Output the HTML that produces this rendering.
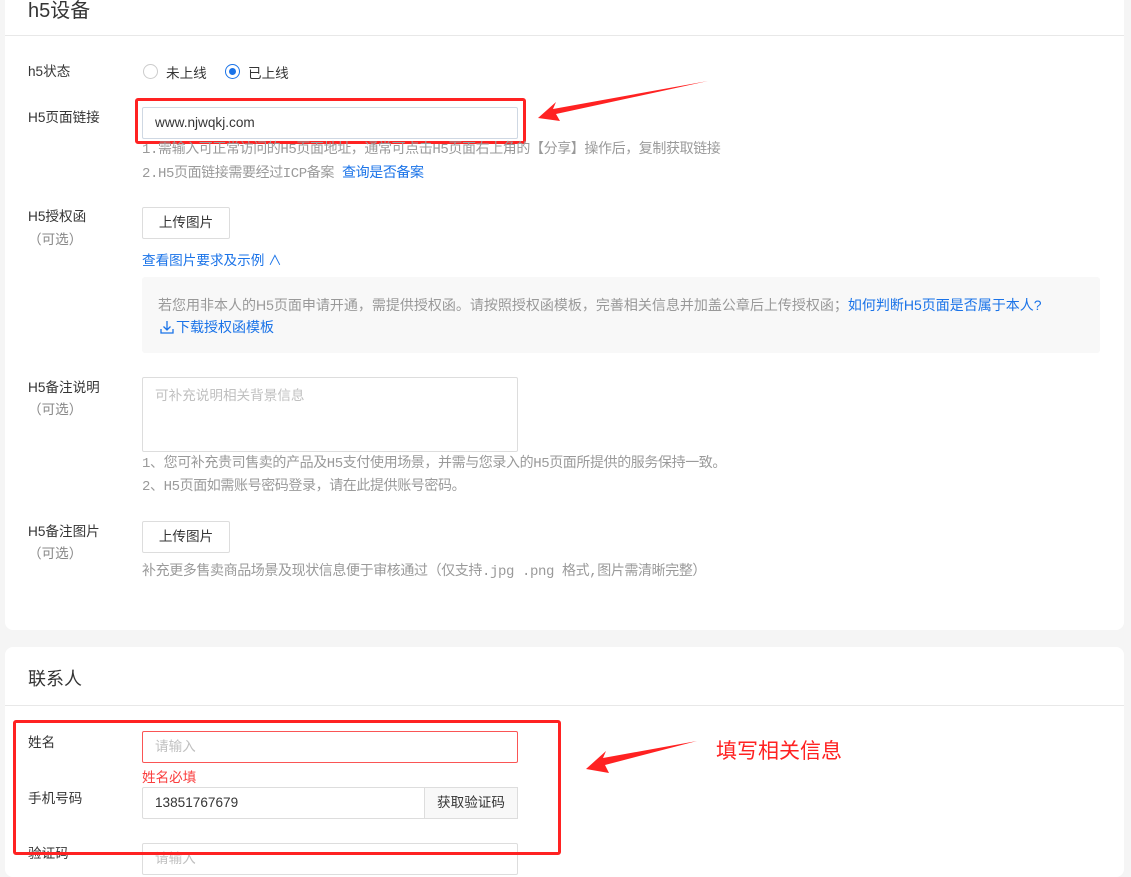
<!DOCTYPE html>
<html><head><meta charset="utf-8"><style>
*{margin:0;padding:0;box-sizing:border-box}
body{width:1131px;height:858px;background:#f5f5f5;font-family:"Liberation Sans","Noto Sans CJK SC",sans-serif;font-size:14px;color:#353535;position:relative;overflow:hidden}
.a{position:absolute}
.card{position:absolute;left:5px;width:1119px;background:#fff;border-radius:8px}
.lbl{position:absolute;left:28px;font-size:13.6px;color:#353535;line-height:18px}
.opt{color:#888}
.hint{position:absolute;left:142px;font-size:14px;color:#9a9a9a;line-height:18px;font-family:"Liberation Mono","Noto Sans CJK SC",monospace;letter-spacing:-0.4px}
.btn{position:absolute;left:142px;width:88px;height:32px;border:1px solid #ddd;border-radius:2px;text-align:center;line-height:30px;font-size:13.6px;color:#353535;background:#fff}
.inp{position:absolute;left:142px;width:376px;border:1px solid #ddd;border-radius:2px;font-size:13.6px;padding-left:12px}
.blue{color:#1a73e8}
.red{color:#fa3e3e}
</style></head><body>
<div class="card" style="top:-10px;height:640px"></div>
<div class="a" style="left:28px;top:-6px;font-size:20px;color:#353535">h5设备</div>
<div class="a" style="left:5px;top:35px;width:1119px;height:1px;background:#e8e8e8"></div>

<div class="lbl" style="top:63px">h5状态</div>
<div class="a" style="left:143px;top:64px;width:15px;height:15px;border:1px solid #ccc;border-radius:50%"></div>
<div class="a" style="left:166px;top:62px;font-size:13.6px">未上线</div>
<div class="a" style="left:225px;top:64px;width:15px;height:15px;border:1px solid #1a73e8;border-radius:50%"><div style="position:absolute;left:3px;top:3px;width:7px;height:7px;background:#1a73e8;border-radius:50%"></div></div>
<div class="a" style="left:248px;top:62px;font-size:13.6px">已上线</div>

<div class="lbl" style="top:109px">H5页面链接</div>
<div class="inp" style="top:107px;height:32px;line-height:30px;border-color:#cfd8e3;color:#353535">www.njwqkj.com</div>
<div class="a" style="left:135px;top:98px;width:391px;height:46px;border:3px solid #f22;border-radius:3px"></div>
<div class="hint" style="top:141px">1.需输入可正常访问的H5页面地址，通常可点击H5页面右上角的【分享】操作后，复制获取链接</div>
<div class="hint" style="top:163px">2.H5页面链接需要经过ICP备案 <span class="blue" style="font-family:'Liberation Sans','Noto Sans CJK SC',sans-serif">查询是否备案</span></div>

<div class="lbl" style="top:208px">H5授权函</div>
<div class="lbl opt" style="top:231px">（可选）</div>
<div class="btn" style="top:207px">上传图片</div>
<div class="a blue" style="left:142px;top:249px;font-size:13.6px">查看图片要求及示例 ∧</div>
<div class="a" style="left:142px;top:277px;width:958px;height:76px;background:#f8f8f8;border-radius:3px"></div>
<div class="a" style="left:158px;top:295px;font-size:14px;color:#999">若您用非本人的H5页面申请开通，需提供授权函。请按照授权函模板，完善相关信息并加盖公章后上传授权函；<span class="blue">如何判断H5页面是否属于本人?</span></div>
<div class="a blue" style="left:158px;top:317px;font-size:14px"><svg width="18" height="16" viewBox="0 0 16 16" style="vertical-align:-3px"><path d="M8 2v9M4.5 7.5L8 11l3.5-3.5M2 10v4h12v-4" fill="none" stroke="#1a73e8" stroke-width="1.3"/></svg>下载授权函模板</div>

<div class="lbl" style="top:379px">H5备注说明</div>
<div class="lbl opt" style="top:401px">（可选）</div>
<div class="inp" style="top:377px;height:75px;padding-top:6px;color:#c0c0c0">可补充说明相关背景信息</div>
<div class="hint" style="top:455px">1、您可补充贵司售卖的产品及H5支付使用场景，并需与您录入的H5页面所提供的服务保持一致。</div>
<div class="hint" style="top:478px">2、H5页面如需账号密码登录，请在此提供账号密码。</div>

<div class="lbl" style="top:523px">H5备注图片</div>
<div class="lbl opt" style="top:545px">（可选）</div>
<div class="btn" style="top:521px">上传图片</div>
<div class="hint" style="top:563px">补充更多售卖商品场景及现状信息便于审核通过（仅支持.jpg .png 格式,图片需清晰完整）</div>

<div class="card" style="top:647px;height:230px"></div>
<div class="a" style="left:28px;top:665px;font-size:18px;color:#353535">联系人</div>
<div class="a" style="left:5px;top:705px;width:1119px;height:1px;background:#e8e8e8"></div>

<div class="lbl" style="top:734px">姓名</div>
<div class="inp" style="top:731px;height:32px;line-height:30px;border-color:#fa5555;color:#c0c0c0">请输入</div>
<div class="a red" style="left:142px;top:766px;font-size:13.6px">姓名必填</div>
<div class="lbl" style="top:790px">手机号码</div>
<div class="inp" style="top:787px;height:32px;line-height:30px;color:#353535">13851767679</div>
<div class="a" style="left:424px;top:787px;width:94px;height:32px;border:1px solid #ddd;background:#f8f8f8;font-size:13.6px;line-height:30px;text-align:center">获取验证码</div>
<div class="lbl" style="top:845px">验证码</div>
<div class="inp" style="top:843px;height:32px;line-height:30px;color:#c0c0c0">请输入</div>
<div class="a" style="left:13px;top:720px;width:548px;height:135px;border:3px solid #f22;border-radius:3px"></div>

<svg class="a" style="left:0;top:0" width="1131" height="858">
<path d="M708 81 L553 109 L556 102 L538 118 L560 121 L556 114 Z" fill="#f22"/>
<path d="M697 741 L603 758 L606 751 L586 769 L609 773 L605 765 Z" fill="#f22"/>
</svg>
<div class="a red" style="left:716px;top:735px;font-size:21px;color:#f22">填写相关信息</div>
</body></html>
